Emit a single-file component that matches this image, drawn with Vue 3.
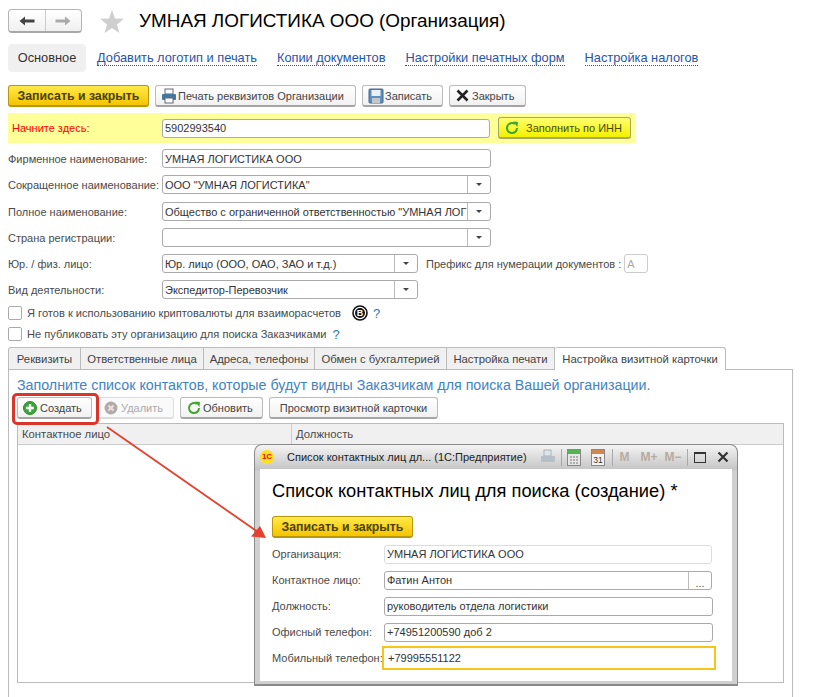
<template>
  <div class="page">
    <div class="head">
      <div class="nav-btns">
        <span class="nav-btn">
          <svg width="16" height="12" viewBox="0 0 16 12"><path d="M0.5 6 6 1.5V4.6H15.5V7.4H6V10.5Z" fill="#444" /></svg>
        </span>
        <span class="nav-btn">
          <svg width="16" height="12" viewBox="0 0 16 12"><path d="M15.5 6 10 1.5V4.6H0.5V7.4H10V10.5Z" fill="#aaa" /></svg>
        </span>
      </div>
      <svg class="star" width="24" height="23" viewBox="0 0 24 23"><path d="M12 0 15 8.4 24 8.8 17 14.4 19.4 23 12 18 4.6 23 7 14.4 0 8.8 9 8.4Z" fill="#cfcfcf" /></svg>
      <h1>УМНАЯ ЛОГИСТИКА ООО (Организация)</h1>
    </div>

    <div class="links">
      <span class="link-active">Основное</span>
      <a v-for="l in links" :key="l">{{ l }}</a>
    </div>

    <div class="toolbar">
      <button class="btn yellow-main">Записать и закрыть</button>
      <button class="btn icon-btn print-btn">
        <svg width="16" height="16" viewBox="0 0 16 16">
          <rect x="4" y="1" width="8" height="5" fill="#fff" stroke="#667" />
          <rect x="1" y="6" width="14" height="6" rx="1" fill="#47779c" />
          <rect x="4" y="10" width="8" height="5" fill="#fff" stroke="#667" />
        </svg>
        Печать реквизитов Организации
      </button>
      <button class="btn icon-btn save-btn">
        <svg width="16" height="16" viewBox="0 0 16 16">
          <rect x="1" y="1" width="14" height="14" rx="1" fill="#5f8fc0" stroke="#41678f" />
          <rect x="3.5" y="2" width="9" height="6" fill="#e8f0f8" />
          <rect x="4" y="10" width="8" height="5" fill="#c4c8cc" />
        </svg>
        Записать
      </button>
      <button class="btn icon-btn close-btn">
        <svg width="13" height="13" viewBox="0 0 13 13"><path d="M1.5 1.5 11.5 11.5M11.5 1.5 1.5 11.5" stroke="#222" stroke-width="2.6" /></svg>
        Закрыть
      </button>
    </div>

    <div class="start-strip">
      <label class="start-label">Начните здесь:</label>
      <div class="field inn-field">5902993540</div>
      <button class="btn icon-btn inn-btn">
        <svg width="14" height="14" viewBox="0 0 14 14"><path d="M12 7A5 5 0 1 1 9.8 2.9" fill="none" stroke="#3fa52b" stroke-width="2" /><path d="M8 0.5 13 1 12.4 6Z" fill="#3fa52b" /></svg>
        Заполнить по ИНН
      </button>
    </div>

    <div class="form">
      <div v-for="r in rows" :key="r.label" class="row">
        <label>{{ r.label }}</label>
        <div class="field" :class="{ narrow: r.narrow }">
          <span class="val">{{ r.value }}</span>
          <span v-if="r.drop" class="drop"><i></i></span>
        </div>
        <template v-if="r.prefix">
          <span class="prefix">Префикс для нумерации документов :</span>
          <div class="field prefix-field">А</div>
        </template>
      </div>
    </div>

    <div class="check first">
      <span class="box"></span>
      <span class="check-text">Я готов к использованию криптовалюты для взаиморасчетов</span>
      <svg class="btc" width="16" height="16" viewBox="0 0 16 16"><circle cx="8" cy="8" r="7" fill="#fff" stroke="#111" stroke-width="1.6" /><circle cx="8" cy="8" r="5" fill="#111" /><text x="8" y="11" text-anchor="middle" font-size="9" font-weight="700" fill="#fff" font-family="Liberation Sans">B</text></svg>
      <span class="q">?</span>
    </div>
    <div class="check second">
      <span class="box"></span>
      <span class="check-text">Не публиковать эту организацию для поиска Заказчиками</span>
      <span class="q q2">?</span>
    </div>

    <div class="tabs">
      <span v-for="t in tabs" :key="t.name" class="tab" :style="{ width: t.w + 'px' }">{{ t.name }}</span>
      <span class="tab active">Настройка визитной карточки</span>
    </div>

    <div class="panel">
      <p class="hint">Заполните список контактов, которые будут видны Заказчикам для поиска Вашей организации.</p>
      <div class="panel-bar">
        <button class="btn icon-btn create">
          <svg width="14" height="14" viewBox="0 0 14 14"><circle cx="7" cy="7" r="6.5" fill="#3aa53a" stroke="#2a8a2a" /><path d="M7 3.2V10.8M3.2 7H10.8" stroke="#fff" stroke-width="2.4" /></svg>
          Создать
        </button>
        <button class="btn icon-btn del">
          <svg width="14" height="14" viewBox="0 0 14 14"><circle cx="7" cy="7" r="6.5" fill="#b5aaaa" /><path d="M4.5 4.5 9.5 9.5M9.5 4.5 4.5 9.5" stroke="#e6e0e0" stroke-width="2" /></svg>
          Удалить
        </button>
        <button class="btn icon-btn refresh">
          <svg width="14" height="14" viewBox="0 0 14 14"><path d="M12 7A5 5 0 1 1 9.8 2.9" fill="none" stroke="#3fa52b" stroke-width="2" /><path d="M8 0.5 13 1 12.4 6Z" fill="#3fa52b" /></svg>
          Обновить
        </button>
        <button class="btn preview">Просмотр визитной карточки</button>
      </div>
      <div class="table">
        <div class="thead">
          <span class="th first-col">Контактное лицо</span>
          <span class="th">Должность</span>
        </div>
      </div>
    </div>

    <!-- выделение и стрелка поверх формы -->
    <div class="red-box"></div>
    <svg class="arrow" width="821" height="697" viewBox="0 0 821 697">
      <path d="M107 427 258 532" stroke="#e5402f" stroke-width="1.8" />
      <path d="M266 538 251 536.500 260 526Z" fill="#e5402f" />
    </svg>

    <div class="dialog">
      <div class="dlg-title">
        <span class="logo">1С</span>
        <span class="dlg-caption">Список контактных лиц дл... (1С:Предприятие)</span>
        <svg class="ti print" width="16" height="16" viewBox="0 0 16 16">
          <rect x="4" y="1" width="7" height="6" fill="#dde3e8" stroke="#a8b4bf" />
          <rect x="1" y="7" width="14" height="6" rx="1" fill="#b4c0ca" />
        </svg>
        <span class="sep s1"></span>
        <svg class="ti" width="14" height="17" viewBox="0 0 14 17">
          <rect x="0.5" y="0.5" width="13" height="16" fill="#e6e6e6" stroke="#888" />
          <rect x="1" y="1" width="12" height="4" fill="#52b552" />
          <path d="M3 8H11M3 11H11M3 14H11" stroke="#777" stroke-dasharray="2 1" />
        </svg>
        <svg class="ti cal" width="14" height="17" viewBox="0 0 14 17">
          <rect x="0.5" y="0.5" width="13" height="16" fill="#f2f2f2" stroke="#888" />
          <rect x="1" y="1" width="12" height="4" fill="#d08850" />
          <text x="7" y="14" text-anchor="middle" font-size="8.5" fill="#333" font-family="Liberation Sans">31</text>
        </svg>
        <span class="sep"></span>
        <span class="mem">M</span>
        <span class="mem m2">M+</span>
        <span class="mem m3">M−</span>
        <span class="sep s3"></span>
        <span class="maxi"></span>
        <svg class="dlg-x" width="12" height="12" viewBox="0 0 12 12"><path d="M1.5 1.5 10.5 10.5M10.5 1.5 1.5 10.5" stroke="#333" stroke-width="2.2" /></svg>
      </div>
      <div class="dlg-body">
        <h2>Список контактных лиц для поиска (создание) *</h2>
        <button class="btn yellow-main dlg-save">Записать и закрыть</button>
        <div class="dlg-row">
          <label>Организация:</label>
          <div class="field dlg-field ro">УМНАЯ ЛОГИСТИКА ООО</div>
        </div>
        <div class="dlg-row">
          <label>Контактное лицо:</label>
          <div class="field dlg-field">
            <span class="val">Фатин Антон</span>
            <span class="drop dots">...</span>
          </div>
        </div>
        <div class="dlg-row">
          <label>Должность:</label>
          <div class="field dlg-field wide">руководитель отдела логистики</div>
        </div>
        <div class="dlg-row">
          <label>Офисный телефон:</label>
          <div class="field dlg-field wide">+74951200590 доб 2</div>
        </div>
        <div class="dlg-row last">
          <label>Мобильный телефон:</label>
          <div class="focus-field">+79995551122</div>
        </div>
      </div>
    </div>
  </div>
</template>

<script setup>
const links = ['Добавить логотип и печать', 'Копии документов', 'Настройки печатных форм', 'Настройка налогов']

const rows = [
  { label: 'Фирменное наименование:', value: 'УМНАЯ ЛОГИСТИКА ООО' },
  { label: 'Сокращенное наименование:', value: 'ООО "УМНАЯ ЛОГИСТИКА"', drop: true },
  { label: 'Полное наименование:', value: 'Общество с ограниченной ответственностью "УМНАЯ ЛОГИСТИКА"', drop: true },
  { label: 'Страна регистрации:', value: '', drop: true },
  { label: 'Юр. / физ. лицо:', value: 'Юр. лицо (ООО, ОАО, ЗАО и т.д.)', drop: true, narrow: true, prefix: true },
  { label: 'Вид деятельности:', value: 'Экспедитор-Перевозчик', drop: true, narrow: true }
]

const tabs = [
  { name: 'Реквизиты', w: 73 },
  { name: 'Ответственные лица', w: 123 },
  { name: 'Адреса, телефоны', w: 111 },
  { name: 'Обмен с бухгалтерией', w: 132 },
  { name: 'Настройка печати', w: 108 }
]
</script>

<style>
html, body {
  margin: 0;
  background: #fff;
}
</style>

<style scoped>
.page {
  position: relative;
  width: 821px;
  height: 697px;
  overflow: hidden;
  box-sizing: border-box;
  padding: 9px 0 0 8px;
  background: #fff;
  font-family: "Liberation Sans", Arial, sans-serif;
  font-size: 11px;
  color: #4a4a4a;
}

.head {
  display: flex;
  align-items: center;
  height: 24px;
}
.nav-btns {
  display: flex;
  width: 74px;
  height: 24px;
  box-sizing: border-box;
  border: 1px solid #b4b4b4;
  border-bottom: 2px solid #a8a8a8;
  border-radius: 4px;
  background: linear-gradient(#fff, #f0f0f0);
}
.nav-btn {
  flex: 1;
  display: flex;
  align-items: center;
  justify-content: center;
}
.nav-btn + .nav-btn {
  border-left: 1px solid #ccc;
}
.star {
  margin-left: 18px;
}
h1 {
  margin: 0 0 0 15px;
  font-size: 18.9px;
  font-weight: 400;
  color: #000;
  white-space: nowrap;
}

.links {
  display: flex;
  align-items: center;
  height: 28px;
  margin-top: 11px;
  font-size: 12.8px;
}
.link-active {
  width: 78px;
  height: 28px;
  line-height: 28px;
  text-align: center;
  border-radius: 4px;
  background: #f0f0f0;
  color: #333;
}
.links a {
  margin-left: 20px;
  color: #1f55a8;
  border-bottom: 1px dotted #1f55a8;
  line-height: 14px;
}
.links a:first-of-type {
  margin-left: 11px;
}

.btn {
  display: inline-flex;
  align-items: center;
  justify-content: center;
  gap: 3px;
  height: 22px;
  padding: 0;
  box-sizing: border-box;
  border: 1px solid #bbb;
  border-bottom: 2px solid #a5a5a5;
  border-radius: 3px;
  background: linear-gradient(#fff, #f1f1f1);
  font-family: inherit;
  font-size: 11px;
  color: #444;
  white-space: nowrap;
}
.icon-btn {
  justify-content: flex-start;
  padding-left: 5px;
}
.yellow-main {
  border-color: #b8980a;
  background: linear-gradient(#ffe94a, #f5c400);
  font-size: 12.3px;
  font-weight: 700;
  color: #4a4010;
}

.toolbar {
  display: flex;
  gap: 6px;
  margin-top: 13px;
}
.toolbar .yellow-main {
  width: 141px;
}
.print-btn {
  width: 201px;
  gap: 1px;
}
.save-btn {
  width: 81px;
  gap: 1px;
}
.close-btn {
  width: 77px;
  padding-left: 6px;
}

.start-strip {
  display: flex;
  align-items: center;
  width: 627px;
  height: 30px;
  margin-top: 6px;
  background: #ffff99;
}
.start-label {
  width: 154px;
  padding-left: 4px;
  box-sizing: border-box;
  color: #f00;
}
.field {
  display: flex;
  align-items: center;
  box-sizing: border-box;
  height: 19px;
  padding-left: 2px;
  border: 1px solid #aaa;
  border-radius: 3px;
  background: #fff;
  color: #333;
  overflow: hidden;
  white-space: nowrap;
}
.inn-field {
  width: 328px;
}
.inn-btn {
  width: 133px;
  margin-left: 8px;
  padding-left: 6px;
  gap: 7px;
  border-color: #a8a860;
  background: linear-gradient(#ffff70, #f2f200);
  color: #4a4a10;
}

.form {
  display: flex;
  flex-direction: column;
  gap: 7px;
  margin-top: 6px;
}
.row {
  display: flex;
  align-items: center;
}
.row:nth-child(2) {
  margin-bottom: 1px;
}
.row label {
  width: 154px;
  flex: none;
  white-space: nowrap;
}
.row > .field {
  width: 329px;
}
.row > .field.narrow {
  width: 256px;
}
.val {
  flex: 1;
  overflow: hidden;
}
.drop {
  display: flex;
  align-items: center;
  justify-content: center;
  flex: none;
  width: 22px;
  height: 100%;
  border-left: 1px solid #bbb;
}
.drop i {
  border: 3px solid transparent;
  border-top: 3px solid #444;
  border-bottom: 0;
}
.prefix {
  margin-left: 8px;
  white-space: nowrap;
}
.row > .prefix-field {
  width: 24px;
  margin-left: 3px;
  border-color: #ccc;
  color: #aaa;
}

.check {
  display: flex;
  align-items: center;
  height: 14px;
  margin-top: 7px;
}
.box {
  width: 12px;
  height: 12px;
  margin-right: 5px;
  border: 1px solid #aaa;
  border-radius: 2px;
  flex: none;
}
.check-text {
  font-size: 11.1px;
}
.btc {
  margin-left: 11px;
}
.q {
  margin-left: 5px;
  font-size: 13px;
  color: #2a7ab8;
}
.q2 {
  margin-left: 6px;
}

.tabs {
  display: flex;
  margin-top: 6px;
  height: 22px;
  font-size: 11.3px;
}
.tab {
  display: flex;
  align-items: center;
  justify-content: center;
  box-sizing: border-box;
  border: 1px solid #bbb;
  border-left: 0;
  border-bottom: 0;
  background: #f0f0f0;
  color: #444;
  white-space: nowrap;
}
.tab:first-child {
  border-left: 1px solid #bbb;
  border-radius: 3px 0 0 0;
}
.tab.active {
  width: 171px;
  height: 23px;
  position: relative;
  z-index: 1;
  background: #fff;
  border-radius: 3px 3px 0 0;
}

.panel {
  width: 785px;
  height: 330px;
  box-sizing: border-box;
  padding: 7px 8px 0 8px;
  border: 1px solid #bbb;
  border-bottom: 0;
}
.hint {
  margin: 0;
  font-size: 14.25px;
  line-height: 16px;
  color: #3f84c0;
  white-space: nowrap;
}
.panel-bar {
  display: flex;
  gap: 6px;
  margin-top: 4px;
}
.create {
  width: 75px;
}
.del {
  width: 76px;
  color: #aaa;
  border-color: #ddd;
  background: #fafafa;
}
.refresh {
  width: 83px;
  padding-left: 6px;
  gap: 2px;
}
.preview {
  width: 169px;
}
.table {
  height: 260px;
  margin-top: 4px;
  box-sizing: border-box;
  border: 1px solid #bbb;
  font-size: 11.3px;
}
.thead {
  display: flex;
  height: 20px;
  background: #f0f0f0;
  border-bottom: 1px solid #ccc;
}
.th {
  display: flex;
  align-items: center;
  padding-left: 4px;
  padding-bottom: 1px;
}
.first-col {
  width: 274px;
  box-sizing: border-box;
  border-right: 1px solid #ccc;
}

.red-box {
  position: absolute;
  left: 12px;
  top: 393px;
  width: 87px;
  height: 32px;
  box-sizing: border-box;
  border: 3px solid #d9362b;
  border-radius: 5px;
}
.arrow {
  position: absolute;
  left: 0;
  top: 0;
  z-index: 3;
  pointer-events: none;
}

.dialog {
  position: absolute;
  left: 254px;
  top: 444px;
  width: 484px;
  height: 242px;
  box-sizing: border-box;
  border: 1px solid #8a8a8a;
  border-bottom-width: 2px;
  border-radius: 8px 8px 0 0;
  background: linear-gradient(#f4f4f4, #c4c4c4 25px, #d0d0d0 26px);
  padding: 0 5px 4px;
  z-index: 2;
}
.dlg-title {
  display: flex;
  align-items: center;
  height: 24px;
  font-size: 11px;
}
.logo {
  width: 14px;
  height: 14px;
  border-radius: 50%;
  background: #ffe020;
  color: #e01010;
  font-size: 8px;
  font-weight: 700;
  line-height: 14px;
  text-align: center;
  flex: none;
}
.dlg-caption {
  margin-left: 13px;
  color: #222;
  white-space: nowrap;
}
.ti {
  flex: none;
}
.print {
  margin-left: 13px;
}
.sep {
  width: 1px;
  height: 17px;
  margin: 0 7px;
  background: #aaa;
  flex: none;
}
.s1 {
  margin: 0 5px;
}
.s3 {
  margin: 0 6px 0 5px;
}
.cal {
  margin-left: 10px;
}
.mem {
  font-size: 12px;
  font-weight: 700;
  color: #b8aca0;
  flex: none;
}
.m2 {
  margin-left: 11px;
}
.m3 {
  margin-left: 7px;
}
.maxi {
  width: 12px;
  height: 11px;
  box-sizing: border-box;
  border: 1px solid #333;
  border-top-width: 2px;
  flex: none;
}
.dlg-x {
  margin-left: 11px;
  flex: none;
}
.dlg-body {
  height: 212px;
  box-sizing: border-box;
  padding: 12px 0 0 12px;
  background: #fff;
}
h2 {
  margin: 0;
  font-size: 18.3px;
  font-weight: 400;
  line-height: 20px;
  color: #000;
  white-space: nowrap;
}
.dlg-save {
  width: 141px;
  margin-top: 15px;
  display: flex;
}
.dlg-row {
  display: flex;
  align-items: center;
  margin-top: 6px;
  height: 20px;
}
.dlg-row label {
  width: 112px;
  flex: none;
  white-space: nowrap;
}
.dlg-field {
  width: 328px;
}
.dlg-field.wide {
  width: 329px;
}
.dlg-field.ro {
  border-color: #ddd;
}
.dots {
  align-items: flex-end;
  color: #555;
}
.dlg-row.last {
  margin-top: 4px;
  height: 23px;
}
.focus-field {
  display: flex;
  align-items: center;
  width: 334px;
  height: 24px;
  margin-left: -2px;
  padding-left: 4px;
  box-sizing: border-box;
  border: 2px solid #f5c518;
  color: #333;
}
</style>
